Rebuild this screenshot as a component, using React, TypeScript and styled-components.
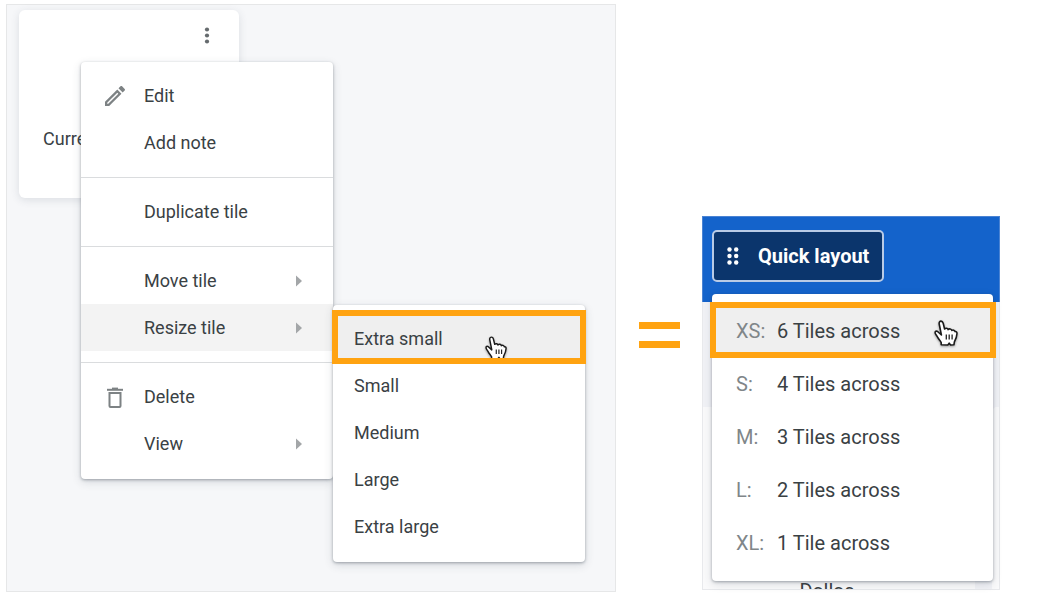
import React from "react";
import styled, { createGlobalStyle, css } from "styled-components";

const orange = "#ffa311";
const ink = "#3a4144";

const GlobalStyle = createGlobalStyle`
  *, *::before, *::after { box-sizing: border-box; }
  body {
    margin: 0;
    background: #fff;
    color: ${ink};
    font-family: Roboto, "Liberation Sans", sans-serif;
  }
  button { font: inherit; color: inherit; }
`;

const Page = styled.main`
  display: grid;
  grid-template-columns: minmax(0, 610fr) minmax(0, 86fr) minmax(0, 298fr);
  min-height: 100vh;
  padding: 4px 62px 6px 6px;
`;

const Dashboard = styled.section`
  padding: 5px 12px;
  background: #f6f7f9;
  border: 1px solid #e6e7e8;
`;

const Tile = styled.article`
  position: relative;
  width: 220px;
  height: 188px;
  padding: 14px 20px 0 24px;
  display: flex;
  flex-direction: column;
  justify-content: space-between;
  background: #fff;
  border-radius: 6px;
  box-shadow: 0 2px 8px rgba(60, 70, 90, 0.14);
`;

const MoreButton = styled.button`
  align-self: flex-end;
  display: flex;
  padding: 0;
  border: 0;
  background: none;
`;

const TileLabel = styled.p`
  margin: 0;
  padding-bottom: 47px;
  font-size: 18px;
  line-height: 24px;
`;

const menuSurface = css`
  margin: 0;
  list-style: none;
  background: #fff;
  border-radius: 4px;
  box-shadow: 0 1px 3px rgba(50, 60, 75, 0.4), 0 3px 10px rgba(50, 60, 75, 0.16);
`;

const ContextMenu = styled.ul`
  ${menuSurface}
  position: absolute;
  left: 62px;
  top: 52px;
  width: 252px;
  padding: 10px 0 12px;
`;

const Submenu = styled.ul`
  ${menuSurface}
  position: absolute;
  left: 100%;
  top: 1px;
  width: 252px;
  padding: 10px 0 12px;
`;

const Divider = styled.li`
  height: 1px;
  margin: 11px 0 10px;
  background: #dadcde;
`;

const MenuEntry = styled.li<{ $shade?: string }>`
  position: relative;
  background: ${(p) => p.$shade ?? "transparent"};
`;

const MenuButton = styled.button<{ $nested?: boolean }>`
  display: flex;
  align-items: center;
  width: 100%;
  height: 47px;
  padding: 0 29px 0 ${(p) => (p.$nested ? "21px" : "24px")};
  border: 0;
  background: none;
  font-size: 18px;
  line-height: 24px;
  text-align: left;
`;

const IconSlot = styled.span`
  display: flex;
  width: 39px;
`;

const EntryText = styled.span`
  flex: 1;
`;

const Highlight = styled.span<{ $inset: string }>`
  position: absolute;
  inset: ${(p) => p.$inset};
  border: 6px solid ${orange};
  pointer-events: none;
`;

const Pointer = styled.svg<{ $right: number; $top: number }>`
  position: absolute;
  right: ${(p) => p.$right}px;
  top: ${(p) => p.$top}px;
  filter: drop-shadow(0 1px 1px rgba(0, 0, 0, 0.35));
`;

const EqualsColumn = styled.div`
  display: flex;
  justify-content: center;
  align-items: flex-start;
  padding-top: 318px;
`;

const LayoutPanel = styled.section`
  align-self: end;
  margin-bottom: 2px;
  background: #f1f2f6;
`;

const Toolbar = styled.header`
  position: relative;
  z-index: 1;
  height: 86px;
  padding: 13px 10px;
  background: #1463cb;
  border: 1px solid #4a83d3;
  border-bottom: 0;
`;

const QuickLayoutButton = styled.button`
  display: flex;
  align-items: center;
  gap: 18px;
  height: 52px;
  margin-left: -1px;
  padding: 0 13px;
  border: 2px solid #b9cbe6;
  border-radius: 5px;
  background: #0b356c;
  color: #fff;
  font-size: 20px;
  font-weight: 700;
  line-height: 24px;
`;

const LayoutMenu = styled.ul`
  ${menuSurface}
  position: absolute;
  left: 9px;
  right: 6px;
  top: 77px;
  padding: 10px 0 12px;
`;

const LayoutButton = styled.button`
  display: grid;
  grid-template-columns: 41px 1fr;
  align-items: center;
  width: 100%;
  height: 53px;
  padding: 0 24px;
  border: 0;
  background: none;
  font-size: 20px;
  line-height: 24px;
  text-align: left;
`;

const SizeCode = styled.span`
  color: #808689;
`;

const TileBoard = styled.div`
  display: flex;
  justify-content: space-between;
  height: 288px;
  padding-top: 105px;
  overflow: hidden;
  border: 1px solid #e8e9ec;
  border-top: 0;
`;

const CityTile = styled.div`
  flex: 0 1 272px;
  padding-top: 172px;
  background: #fafafb;
  font-size: 20px;
  line-height: 24px;
  text-align: center;
  text-indent: -24px;
`;

const NextTile = styled.div`
  width: 7px;
  background: #fafafb;
  border-top-left-radius: 5px;
`;

const Pencil = () => (
  <svg width="20" height="20" viewBox="3 3 18 18" fill="#7d8284">
    <path d="M14.060 9.020l.92.92L5.920 19H5v-.92l9.060-9.060M17.660 3c-.25 0-.51.1-.7.29l-1.830 1.830 3.750 3.750 1.830-1.830c.39-.39.39-1.020 0-1.410l-2.340-2.340c-.2-.2-.45-.29-.71-.29zm-3.600 3.190L3 17.250V21h3.750L17.810 9.940l-3.750-3.750z" />
  </svg>
);

const Trash = () => (
  <svg width="20" height="22" viewBox="0 0 20 22" fill="none" stroke="#7d8284" strokeWidth="2">
    <path d="M4.500 7v13c0 .6.4 1 1 1h9c.6 0 1-.4 1-1V7z" />
    <path d="M2 3.800h16" />
    <path d="M7 2.600h6" />
  </svg>
);

const Chevron = () => (
  <svg width="10" height="12" viewBox="0 0 10 12" fill="#a3a6a8">
    <path d="M2 .5 8 6l-6 5.500z" />
  </svg>
);

const Dots = () => (
  <svg width="24" height="24" viewBox="0 0 24 24" fill="#666b6e">
    <circle cx="12" cy="5.500" r="2.100" />
    <circle cx="12" cy="11.500" r="2.100" />
    <circle cx="12" cy="17.500" r="2.100" />
  </svg>
);

const Grip = () => (
  <svg width="13" height="20" viewBox="0 0 13 20" fill="#fff">
    {[3.5, 10, 16.5].map((y) => (
      <React.Fragment key={y}>
        <circle cx="2.500" cy={y} r="2.200" />
        <circle cx="9.200" cy={y} r="2.200" />
      </React.Fragment>
    ))}
  </svg>
);

const Hand = ({ right, top, width, height }: { right: number; top: number; width: number; height: number }) => (
  <Pointer $right={right} $top={top} width={width} height={height} viewBox="0 0 24 27" aria-hidden="true">
    <path
      d="M7.200 24.800V22.600C6.300 20.700 4.800 19.500 3.700 17.400 2.900 15.800 1.400 14.200 1.100 12.800.9 11.300 2.300 10.700 3.600 11.500L7.400 15 5.200 4C4.900 2.500 5.500 1.300 6.800 1.100 8.100 1 8.800 1.800 9.200 3.200L10.600 9C11.600 7.800 13.600 8 14.200 9.600 15.200 8.400 17.300 8.800 17.900 10.400 19 9.500 20.600 10.200 21.100 11.600 22.300 11.200 23.100 12.200 23 13.600 22.900 17 21.900 19 20.400 21.800L19.900 24.800 16.600 25 15.200 23.200 13.800 25z"
      fill="#fff"
      stroke="#1b1b1b"
      strokeWidth="1.600"
      strokeLinejoin="round"
    />
    <path d="M12.300 14.500v5M15.200 14.500v5M18.100 14.500v5" stroke="#222" strokeWidth="1.300" />
  </Pointer>
);

const Entry = ({ label, icon, arrow, shade, children }: {
  label: string;
  icon?: React.ReactNode;
  arrow?: boolean;
  shade?: string;
  children?: React.ReactNode;
}) => (
  <MenuEntry $shade={shade}>
    <MenuButton type="button">
      <IconSlot>{icon}</IconSlot>
      <EntryText>{label}</EntryText>
      {arrow && <Chevron />}
    </MenuButton>
    {children}
  </MenuEntry>
);

const sizes = ["Extra small", "Small", "Medium", "Large", "Extra large"];
const layouts = [
  ["XS:", "6 Tiles across"],
  ["S:", "4 Tiles across"],
  ["M:", "3 Tiles across"],
  ["L:", "2 Tiles across"],
  ["XL:", "1 Tile across"],
];

export default function App() {
  return (
    <>
      <GlobalStyle />
      <Page>
        <Dashboard>
          <Tile>
            <MoreButton type="button" aria-label="Tile options"><Dots /></MoreButton>
            <TileLabel>Curre</TileLabel>
            <ContextMenu>
              <Entry label="Edit" icon={<Pencil />} />
              <Entry label="Add note" />
              <Divider role="separator" />
              <Entry label="Duplicate tile" />
              <Divider role="separator" />
              <Entry label="Move tile" arrow />
              <Entry label="Resize tile" arrow shade="#f3f3f3">
                <Submenu>
                  {sizes.map((size, i) => (
                    <MenuEntry key={size} $shade={i === 0 ? "#efefef" : undefined}>
                      <MenuButton type="button" $nested>{size}</MenuButton>
                      {i === 0 && (
                        <>
                          <Hand right={78} top={21} width={22} height={25} />
                          <Highlight $inset="-5px -1px -2px" />
                        </>
                      )}
                    </MenuEntry>
                  ))}
                </Submenu>
              </Entry>
              <Divider role="separator" />
              <Entry label="Delete" icon={<Trash />} />
              <Entry label="View" arrow />
            </ContextMenu>
          </Tile>
        </Dashboard>
        <EqualsColumn>
          <svg width="41" height="26" viewBox="0 0 41 26" fill={orange} role="img" aria-label="equals">
            <path d="M0 0h41v7H0zM0 19h41v7H0z" />
          </svg>
        </EqualsColumn>
        <LayoutPanel>
          <Toolbar>
            <QuickLayoutButton type="button"><Grip />Quick layout</QuickLayoutButton>
            <LayoutMenu>
              {layouts.map(([code, label], i) => (
                <MenuEntry key={code} $shade={i === 0 ? "#efefef" : undefined}>
                  <LayoutButton type="button">
                    <SizeCode>{code}</SizeCode>
                    <span>{label}</span>
                  </LayoutButton>
                  {i === 0 && (
                    <>
                      <Hand right={35} top={16} width={24} height={27} />
                      <Highlight $inset="-2px -3px -1px -2px" />
                    </>
                  )}
                </MenuEntry>
              ))}
            </LayoutMenu>
          </Toolbar>
          <TileBoard>
            <CityTile>Dallas</CityTile>
            <NextTile />
          </TileBoard>
        </LayoutPanel>
      </Page>
    </>
  );
}
